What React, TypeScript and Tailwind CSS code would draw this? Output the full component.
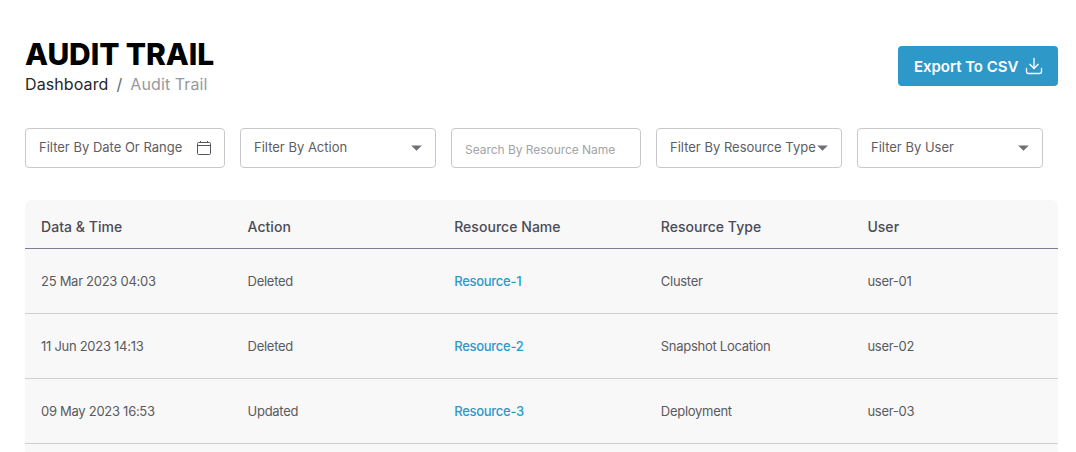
import { Download } from "lucide-react"

const rows = [
  { date: "25 Mar 2023 04:03", action: "Deleted", name: "Resource-1", type: "Cluster", user: "user-01" },
  { date: "11 Jun 2023 14:13", action: "Deleted", name: "Resource-2", type: "Snapshot Location", user: "user-02" },
  { date: "09 May 2023 16:53", action: "Updated", name: "Resource-3", type: "Deployment", user: "user-03" },
]

const Caret = () => (
  <svg width="11" height="6" viewBox="0 0 11 6" className="shrink-0">
    <path d="M0.2 0.5h10.6L5.5 5.8z" fill="#6f6f76" />
  </svg>
)

const Calendar = () => (
  <svg width="16" height="16" viewBox="0 0 16 16" fill="none" stroke="#55555c" strokeWidth="1" className="shrink-0">
    <rect x="1.5" y="2.5" width="13" height="12" rx="1" />
    <path d="M1.5 5.5h13M4.5 1v2M11.5 1v2" />
  </svg>
)

function Select({ label, width }: { label: string; width: string }) {
  return (
    <div className={`flex h-[40px] items-center justify-between rounded border border-[#c8c8cc] pl-[13px] pr-[13px] text-[13px] text-[#5d5d64] ${width}`}>
      <span className="whitespace-nowrap">{label}</span>
      <Caret />
    </div>
  )
}

export default function App() {
  return (
    <div className="h-[452px] w-[1076px] overflow-hidden bg-white pl-[25px] pr-[18px] pt-[37px] font-['Inter',sans-serif]">
      <header className="flex items-start justify-between">
        <div>
          <h1 className="text-[30px] font-extrabold leading-[34px] tracking-[-0.1px] text-black">AUDIT TRAIL</h1>
          <div className="mt-[1px] flex items-center text-[16px] leading-[24px] tracking-[0.1px]">
            <span className="text-[#26262b]">Dashboard</span>
            <span className="mx-[8px] text-[#66666c]">/</span>
            <span className="text-[#98989d]">Audit Trail</span>
          </div>
        </div>
        <button className="mt-[9px] flex h-[40px] w-[160px] items-center gap-[6px] rounded bg-[#2e99c9] pl-[16px] text-[15px] font-semibold tracking-[-0.04px] text-white">
          <span className="pt-[2px]">Export To CSV</span>
          <Download size={20} strokeWidth={1.6} />
        </button>
      </header>

      <div className="mt-[32px] flex gap-[15px]">
        <div className="flex h-[40px] w-[200px] items-center justify-between rounded border border-[#c8c8cc] pl-[13px] pr-[12px] text-[13px] text-[#5d5d64]">
          <span className="whitespace-nowrap">Filter By Date Or Range</span>
          <Calendar />
        </div>
        <Select label="Filter By Action" width="w-[196px]" />
        <div className="flex h-[40px] w-[190px] items-center rounded border border-[#c8c8cc] pl-[13px] pt-[4px] text-[12px] tracking-[-0.04px] text-[#a3a3a8]">
          Search By Resource Name
        </div>
        <Select label="Filter By Resource Type" width="w-[186px]" />
        <Select label="Filter By User" width="w-[186px]" />
      </div>

      <div className="mt-[32px] rounded-t-md bg-[#f8f8f9]">
        <div className="grid h-[49px] grid-cols-5 items-center border-b border-[#7e7c93] pt-[4px] text-[14px] font-medium tracking-[0.04px] text-[#4b4b55]">
          <span className="pl-[16px]">Data &amp; Time</span>
          <span className="pl-[16px]">Action</span>
          <span className="pl-[16px]">Resource Name</span>
          <span className="pl-[16px]">Resource Type</span>
          <span className="pl-[16px]">User</span>
        </div>
        {rows.map((row) => (
          <div key={row.name} className="grid h-[65px] grid-cols-5 items-center border-b border-[#cfcfd3] pt-[1px] text-[13px] tracking-[-0.28px] text-[#5a5a60]">
            <span className="pl-[16px]">{row.date}</span>
            <span className="pl-[16px]">{row.action}</span>
            <span className="pl-[16px] font-medium text-[#2e99c9]">{row.name}</span>
            <span className="pl-[16px]">{row.type}</span>
            <span className="pl-[16px]">{row.user}</span>
          </div>
        ))}
        <div className="h-[40px]" />
      </div>
    </div>
  )
}
